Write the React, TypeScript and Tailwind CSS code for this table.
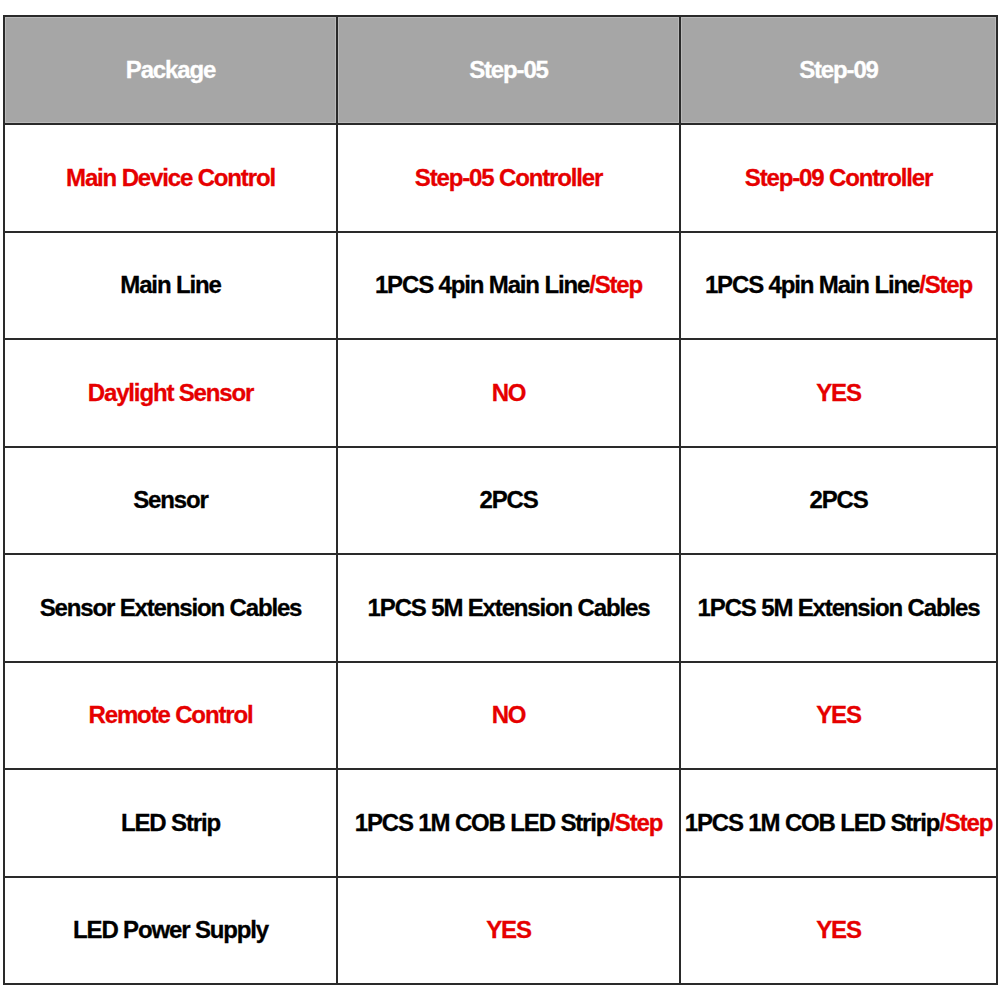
const RED = "text-[#e60000]"

type Cell = { parts: { text: string; red?: boolean }[] }

const c = (text: string, red = false): Cell => ({ parts: [{ text, red }] })
const step = (text: string): Cell => ({ parts: [{ text }, { text: "/Step", red: true }] })

const rows: Cell[][] = [
  [c("Main Device Control", true), c("Step-05 Controller", true), c("Step-09 Controller", true)],
  [c("Main Line"), step("1PCS 4pin Main Line"), step("1PCS 4pin Main Line")],
  [c("Daylight Sensor", true), c("NO", true), c("YES", true)],
  [c("Sensor"), c("2PCS"), c("2PCS")],
  [c("Sensor Extension Cables"), c("1PCS 5M Extension Cables"), c("1PCS 5M Extension Cables")],
  [c("Remote Control", true), c("NO", true), c("YES", true)],
  [c("LED Strip"), step("1PCS 1M COB LED Strip"), step("1PCS 1M COB LED Strip")],
  [c("LED Power Supply"), c("YES", true), c("YES", true)],
]

export default function App() {
  return (
    <div className="w-[1000px] h-[1000px] bg-white pt-[15px] pl-[3px]">
      <table
        className="w-[993px] h-[969px] border-collapse table-fixed border-2 border-[#1a1a1a] text-[24px] font-bold tracking-[-1.15px] text-black [-webkit-text-stroke:0.3px]"
        style={{ fontFamily: '"Liberation Sans", Arial, sans-serif' }}
      >
        <colgroup>
          <col className="w-[333px]" />
          <col className="w-[343px]" />
          <col className="w-[317px]" />
        </colgroup>
        <thead>
          <tr className="h-[108px] bg-[#a6a6a6] text-white">
            {["Package", "Step-05", "Step-09"].map((h) => (
              <th key={h} className="border-2 border-[#2a2a2a] text-center font-bold shadow-[inset_0_0_0_1px_#bababa]">
                {h}
              </th>
            ))}
          </tr>
        </thead>
        <tbody>
          {rows.map((row, i) => (
            <tr key={i} className="h-[107.5px]">
              {row.map((cell, j) => (
                <td key={j} className="border-2 border-[#2a2a2a] text-center whitespace-nowrap">
                  {cell.parts.map((p, k) => (
                    <span key={k} className={p.red ? RED : ""}>
                      {p.text}
                    </span>
                  ))}
                </td>
              ))}
            </tr>
          ))}
        </tbody>
      </table>
    </div>
  )
}
